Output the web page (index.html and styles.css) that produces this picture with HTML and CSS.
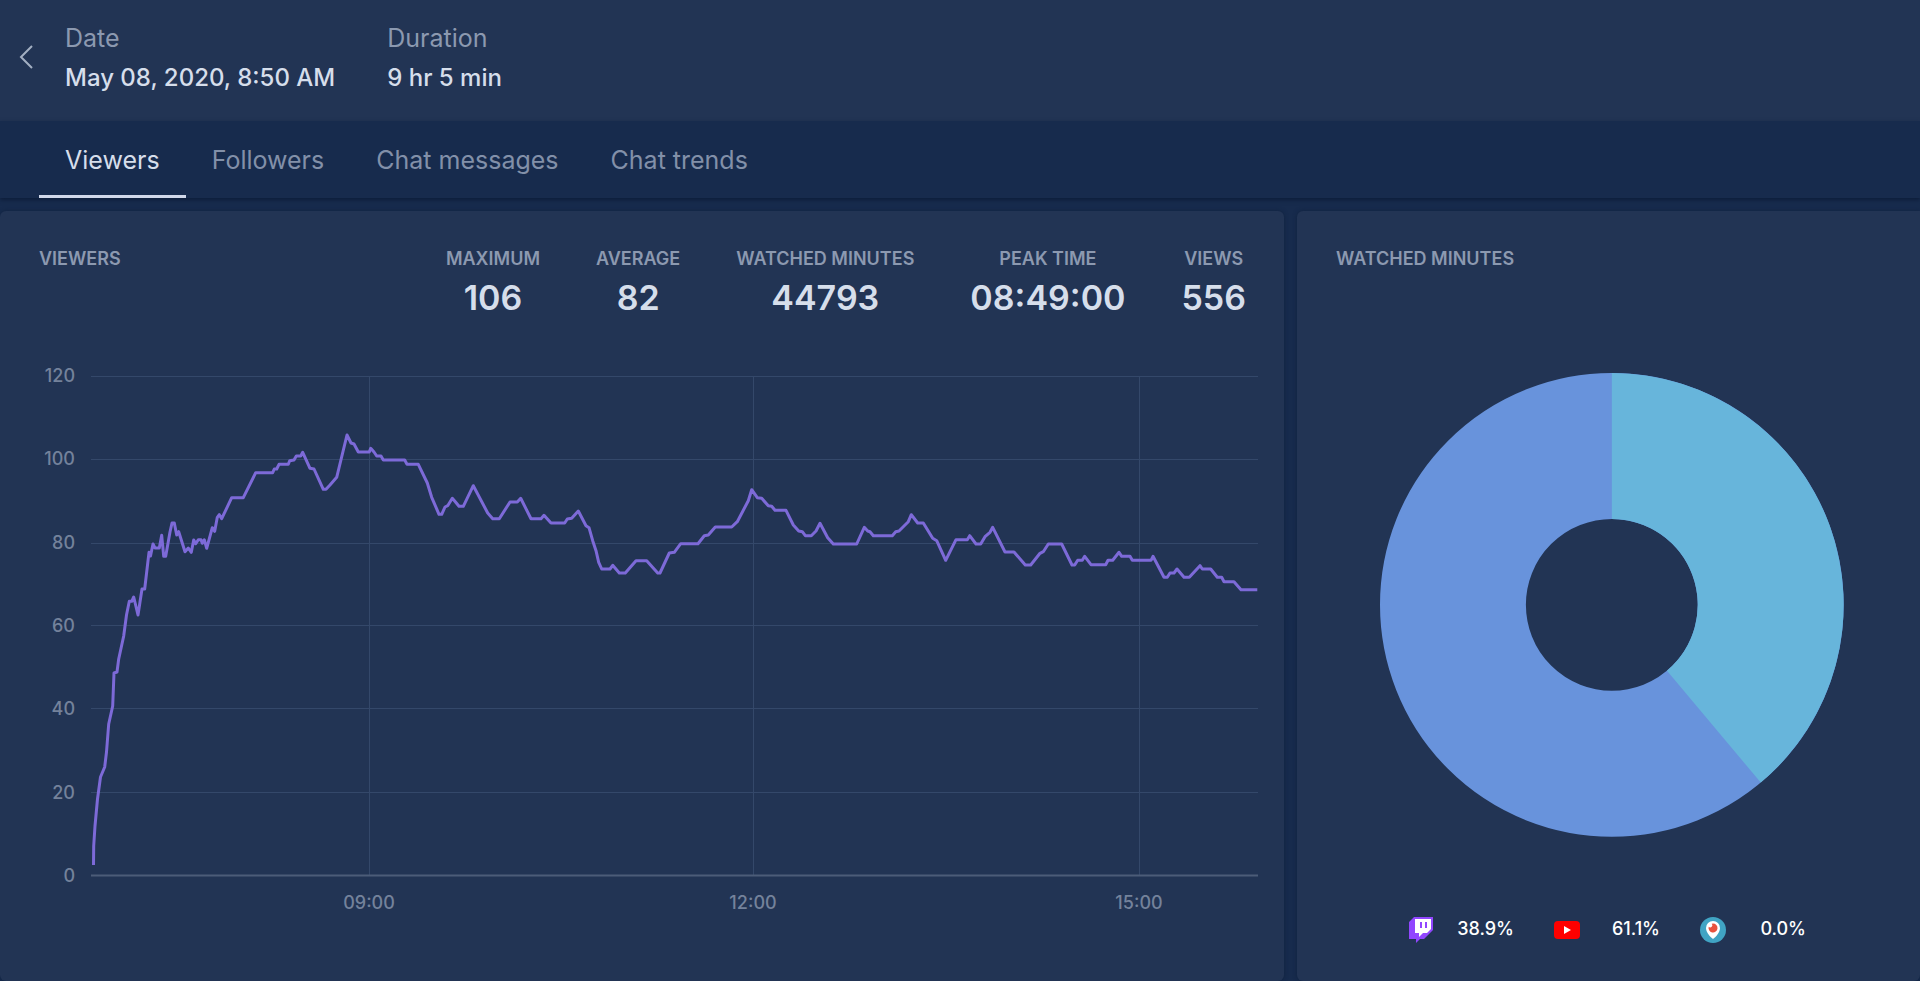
FILE: index.html
```html
<!DOCTYPE html>
<html lang="en">
<head>
<meta charset="utf-8">
<title>Stream statistics</title>
<meta name="viewport" content="width=device-width, initial-scale=1">
<link rel="stylesheet" href="styles.css">
</head>
<body>
<div class="page">
  <header class="header">
    <button class="back" type="button" aria-label="Back">
      <svg class="back-icon" viewBox="0 0 16 26" aria-hidden="true"><path d="M14 2 3 13l11 11"/></svg>
    </button>
    <dl class="meta">
      <div><dt>Date</dt><dd>May 08, 2020, 8:50 AM</dd></div>
      <div><dt>Duration</dt><dd>9 hr 5 min</dd></div>
    </dl>
  </header>
  <nav class="tabs">
    <a class="tab tab-active" href="#viewers">Viewers</a>
    <a class="tab" href="#followers">Followers</a>
    <a class="tab" href="#messages">Chat messages</a>
    <a class="tab" href="#trends">Chat trends</a>
  </nav>
  <main class="panels">
    <section class="panel panel-viewers">
      <div class="panel-head">
        <h2 class="title">Viewers</h2>
        <dl class="stats">
          <div><dt>Maximum</dt><dd>106</dd></div>
          <div><dt>Average</dt><dd>82</dd></div>
          <div><dt>Watched minutes</dt><dd>44793</dd></div>
          <div><dt>Peak time</dt><dd>08:49:00</dd></div>
          <div><dt>Views</dt><dd>556</dd></div>
        </dl>
      </div>
      <svg class="chart" viewBox="39 360 1219 560" role="img" aria-label="Viewers over time">
        <path class="grid" d="M91 377.5H1258M91 460.5H1258M91 544.5H1258M91 626.5H1258M91 709.5H1258M91 793.5H1258M369.5 377V877M753.5 377V877M1139.5 377V877"/>
        <path class="axis" d="M91 876.5H1258"/>
        <g class="ylabels">
          <text x="75" y="383">120</text>
          <text x="75" y="466">100</text>
          <text x="75" y="550">80</text>
          <text x="75" y="633">60</text>
          <text x="75" y="716">40</text>
          <text x="75" y="800">20</text>
          <text x="75" y="883">0</text>
        </g>
        <g class="xlabels">
          <text x="369" y="910">09:00</text>
          <text x="753" y="910">12:00</text>
          <text x="1139" y="910">15:00</text>
        </g>
        <polyline class="line" points="93.5,866 93.7,847 95,827 97.5,800 100.5,778 104.7,768 106.5,753 108.7,725 112.7,707 114,674 117,673 118.7,660 123.7,637 126.5,616 129.3,602.3 131.7,602.3 133.7,598 138,616 142,590 144.7,590 149,553.3 150.5,557 153,545 155,549 159.3,549 161.7,536.3 163.7,557.3 165.7,557.3 170,533 172,524 174.3,524 176.7,536 178.7,532.7 185,552.7 188.3,549 191.3,553.3 193.7,541 195.7,544.7 198.3,540.7 201,540.7 202.3,544.3 204.3,540.7 206.7,549.3 212.3,528.7 214.7,532.3 217.3,518.3 219.3,515.7 221.7,519.7 231.7,498.7 243.3,498.7 255.7,473.7 272.7,473.7 274.3,470 276.7,470 279,465.3 288.3,465.3 289.7,461.7 294,461 296.3,457 300.7,457 302.7,453.3 310,469.3 314,470 323.3,490.3 326,490.3 330,486 336.7,478.3 347,436 351,444 354,445 358.3,453 369.3,453 370.7,449.3 374,453 376.7,457 381,457 383.3,461 404.7,461 407,465.3 418.3,465.3 427.3,484 431.7,498.3 439,515.3 441.7,515.3 445,508 447.7,506.7 452.3,499.3 455.3,502.7 459,507.3 463.3,507.3 473.3,486.7 487.7,514 492.7,519.7 499.3,519.7 510,503 517.3,503 520.7,499.3 531,519.7 541,519.7 544,516.3 551,524 564.7,524 567.3,520 571.7,519.3 578.3,512 586,526.7 589,528.7 592.7,541.7 596,551.7 598.7,563.3 601.7,570 610,570 612.7,566.3 619.3,574 625.3,574 636,561.7 646.7,561.7 657.7,574 660,574 669.3,554 674.3,553.3 680.7,544.7 698,544.7 704.3,536.7 708.3,536 715.3,528 731.7,528 737.3,522.7 748.3,501.7 751.7,490.7 757.3,498.7 761.7,499.3 768.3,506.7 771.7,507.3 775,511.3 786,511.3 793.3,526 798.7,532 802.3,532.7 805.3,536.7 811.3,536.7 816,532 820,524.3 827.7,538.7 833.3,545 856.7,545 864.3,528.3 867.7,532 870,532.7 873.3,536.7 892.3,536.7 895.7,532.7 899,532 908.3,522.7 911.3,515.7 917.7,524 923.3,524 932.7,539.3 936.7,541.7 945.7,561.3 956,540.7 967.3,540.7 969.7,536.7 976,545 980.7,545 985,537.7 990,533.3 992.7,528.3 1005,553 1014,553 1025.3,566 1030.7,566 1040,554.3 1043.3,552.7 1048.3,545 1061.7,545 1072,566 1074.7,566 1077.7,561.3 1082.3,561.3 1084.7,557.3 1091,565.7 1105.7,565.7 1108,561.3 1112.7,561.3 1119,553.3 1121.7,557.3 1130,557.3 1132.3,561.3 1151,561.3 1153,557.3 1164,578.3 1167.3,578.3 1170,574 1174,574 1177,570 1184,578.3 1189.3,578.3 1200,566.7 1202.3,570 1210.7,570 1217.3,578.3 1221.7,578.3 1224,582.7 1234,582.7 1241,590.7 1257.3,590.7"/>
      </svg>
    </section>
    <section class="panel panel-minutes">
      <div class="panel-head"><h2 class="title">Watched minutes</h2></div>
      <svg class="donut" viewBox="-232 -232 464 464" role="img" aria-label="Watched minutes by platform">
        <circle class="slice-youtube" r="159" />
        <path class="slice-twitch" d="M0-232A232 232 0 0 1 149 177.800L55.200 65.900A86 86 0 0 0 0-86Z"/>
      </svg>
      <ul class="legend">
        <li>
          <svg class="logo" viewBox="0 0 26 26" role="img" aria-label="Twitch">
            <path fill="#9146ff" d="M6 0h19v13l-9 9h-4l-4 4v-4H1V5z"/>
            <path fill="#fff" d="M7 2h16v10l-4 4h-4l-4 4v-4H7z"/>
            <path fill="#9146ff" d="M12 5h2v6h-2zM17 5h2v6h-2z"/>
          </svg>
          <span>38.9%</span>
        </li>
        <li>
          <svg class="logo" viewBox="0 0 26 26" role="img" aria-label="YouTube">
            <rect y="4" width="26" height="18" rx="4" fill="#f00"/>
            <path fill="#fff" d="M10 9v8l7-4z"/>
          </svg>
          <span>61.1%</span>
        </li>
        <li>
          <svg class="logo" viewBox="0 0 26 26" role="img" aria-label="Periscope">
            <circle cx="13" cy="13" r="13" fill="#40a4c4"/>
            <path fill="#fff" d="M13 4a7 7 0 0 1 7 7c0 4-4 9-7 11-3-2-7-7-7-11a7 7 0 0 1 7-7z"/>
            <path fill="#e8523f" d="M13 6.500a4.500 4.500 0 1 1-4.300 3.200 2 2 0 1 0 3-3z"/>
          </svg>
          <span>0.0%</span>
        </li>
      </ul>
    </section>
  </main>
</div>
</body>
</html>
```
FILE: styles.css
```css
* { box-sizing: border-box; }

body {
  margin: 0;
  background: #172b4d;
  color: #d6deeb;
  font-family: Inter, Roboto, sans-serif;
  font-size: 25px;
  line-height: 32px;
}

dl, dd, h2, ul { margin: 0; padding: 0; }

.page {
  display: flex;
  flex-direction: column;
  min-height: 100vh;
}

.header {
  display: flex;
  align-items: flex-start;
  padding: 20px 18px 25px;
  background: #223454;
}

.back {
  width: 47px;
  margin-top: 24px;
  padding: 0;
  border: 0;
  background: none;
  color: #a3afc2;
  line-height: 0;
  text-align: left;
  cursor: pointer;
}

.back-icon {
  width: 16px;
  height: 26px;
  fill: none;
  stroke: currentColor;
  stroke-width: 2;
}

.meta { display: flex; gap: 52px; }
.meta dt { margin-bottom: 4px; color: #8c99b0; line-height: 36px; }
.meta dd { font-size: 24px; font-weight: 500; line-height: 36px; }

.tabs {
  display: flex;
  padding: 0 39px;
  box-shadow: 0 2px 4px #0d1d3a;
}

.tab {
  padding: 23px 26px 19px;
  border-bottom: 3px solid transparent;
  color: #8290a9;
  text-decoration: none;
}

.tab-active { border-color: #d0d8ea; color: #d6deeb; }

.panels {
  display: grid;
  flex: 1;
  grid-template-columns: 1284fr 623fr;
  gap: 13px;
  padding-top: 13px;
}

.panel {
  padding: 35px 26px 12px 39px;
  border-radius: 6px;
  background: #223454;
  box-shadow: 0 0 4px #10223f;
}

.panel-minutes { padding-right: 32px; border-top-right-radius: 0; }

.panel-head {
  display: flex;
  justify-content: space-between;
  min-height: 113px;
  padding-right: 12px;
}

.title, .stats dt {
  color: #8c99b0;
  font-size: 18px;
  font-weight: 600;
  line-height: 26px;
  text-transform: uppercase;
}

.stats { display: flex; gap: 56px; text-align: center; }
.stats dd { font-size: 34px; font-weight: 600; line-height: 52px; }

.chart { display: block; width: 100%; height: auto; }
.grid { fill: none; stroke: #34486a; }
.axis { stroke: #4c5c78; stroke-width: 2; }
.line { fill: none; stroke: #7d6ad8; stroke-width: 3; stroke-linejoin: round; }
.ylabels, .xlabels { fill: #74829b; font-size: 18px; font-weight: 500; }
.ylabels { text-anchor: end; }
.xlabels { text-anchor: middle; }

.donut {
  display: block;
  width: 84%;
  height: auto;
  margin: 14px auto 0;
}
.slice-youtube { fill: none; stroke: #6893dc; stroke-width: 146; }
.slice-twitch { fill: #67b5db; }

.legend {
  display: flex;
  justify-content: center;
  gap: 40px;
  margin-top: 80px;
  padding-right: 10px;
  color: #fff;
  font-size: 18px;
  font-weight: 500;
  line-height: 24px;
  list-style: none;
}
.legend li { display: flex; }
.legend span { width: 80px; text-align: right; }
.logo { width: 26px; height: 26px; }
```
